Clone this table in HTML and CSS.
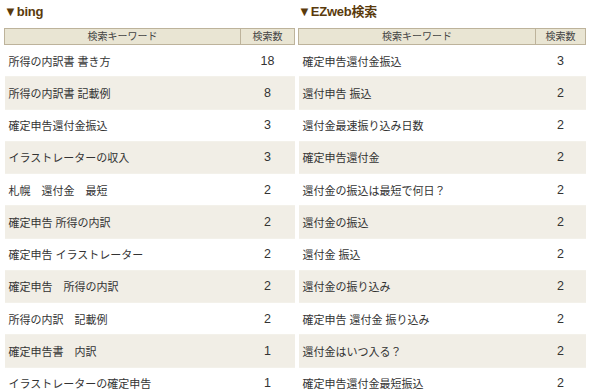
FILE: index.html
```html
<!DOCTYPE html>
<html lang="ja">
<head>
<meta charset="utf-8">
<link rel="stylesheet" href="styles.css">
</head>
<body>
<div class="wrap">
  <section class="panel panel-left">
    <h2 class="title">▼bing</h2>
    <table class="kw">
      <thead><tr><th class="c-kw">検索キーワード</th><th class="c-n">検索数</th></tr></thead>
      <tbody>
        <tr><td>所得の内訳書 書き方</td><td class="n">18</td></tr>
        <tr><td>所得の内訳書 記載例</td><td class="n">8</td></tr>
        <tr><td>確定申告還付金振込</td><td class="n">3</td></tr>
        <tr><td>イラストレーターの収入</td><td class="n">3</td></tr>
        <tr><td>札幌　還付金　最短</td><td class="n">2</td></tr>
        <tr><td>確定申告 所得の内訳</td><td class="n">2</td></tr>
        <tr><td>確定申告 イラストレーター</td><td class="n">2</td></tr>
        <tr><td>確定申告　所得の内訳</td><td class="n">2</td></tr>
        <tr><td>所得の内訳　記載例</td><td class="n">2</td></tr>
        <tr><td>確定申告書　内訳</td><td class="n">1</td></tr>
        <tr><td>イラストレーターの確定申告</td><td class="n">1</td></tr>
      </tbody>
    </table>
  </section>
  <section class="panel panel-right">
    <h2 class="title">▼EZweb検索</h2>
    <table class="kw">
      <thead><tr><th class="c-kw2">検索キーワード</th><th class="c-n">検索数</th></tr></thead>
      <tbody>
        <tr><td>確定申告還付金振込</td><td class="n">3</td></tr>
        <tr><td>還付申告 振込</td><td class="n">2</td></tr>
        <tr><td>還付金最速振り込み日数</td><td class="n">2</td></tr>
        <tr><td>確定申告還付金</td><td class="n">2</td></tr>
        <tr><td>還付金の振込は最短で何日？</td><td class="n">2</td></tr>
        <tr><td>還付金の振込</td><td class="n">2</td></tr>
        <tr><td>還付金 振込</td><td class="n">2</td></tr>
        <tr><td>還付金の振り込み</td><td class="n">2</td></tr>
        <tr><td>確定申告 還付金 振り込み</td><td class="n">2</td></tr>
        <tr><td>還付金はいつ入る？</td><td class="n">2</td></tr>
        <tr><td>確定申告還付金最短振込</td><td class="n">2</td></tr>
      </tbody>
    </table>
  </section>
</div>
</body>
</html>
```
FILE: styles.css
```css
html, body {
  margin: 0;
  padding: 0;
  background: #fff;
}
body {
  font-family: "Liberation Sans", "Noto Sans CJK JP", sans-serif;
  color: #333;
  overflow: hidden;
}
.wrap {
  display: flex;
  gap: 3px;
  padding-left: 4px;
}
.panel-left { width: 291px; }
.panel-right { width: 288px; }
.title {
  margin: 0;
  padding-top: 3px;
  height: 25px;
  font-size: 13px;
  line-height: 18px;
  font-weight: bold;
  color: #5a3a0c;
  letter-spacing: -0.2px;
}
.kw {
  width: 100%;
  border-collapse: collapse;
  table-layout: fixed;
}
.kw th {
  background: #e9e5d3;
  border: 1px solid #bdb39b;
  font-size: 10px;
  font-weight: normal;
  color: #444;
  height: 15px;
  padding: 0;
  line-height: 15px;
  text-align: center;
}
.c-kw { width: 235px; }
.c-kw2 { width: 236px; }
.kw td {
  height: 32.25px;
  padding: 0 0 0 4px;
  font-size: 11px;
  color: #333;
  border-bottom: 1px solid #f3f1ea;
  box-sizing: border-box;
}
.kw tbody tr:nth-child(even) td {
  background: #f1eee6;
}
.kw td.n {
  text-align: center;
  padding: 0;
  font-size: 12.5px;
}
```
